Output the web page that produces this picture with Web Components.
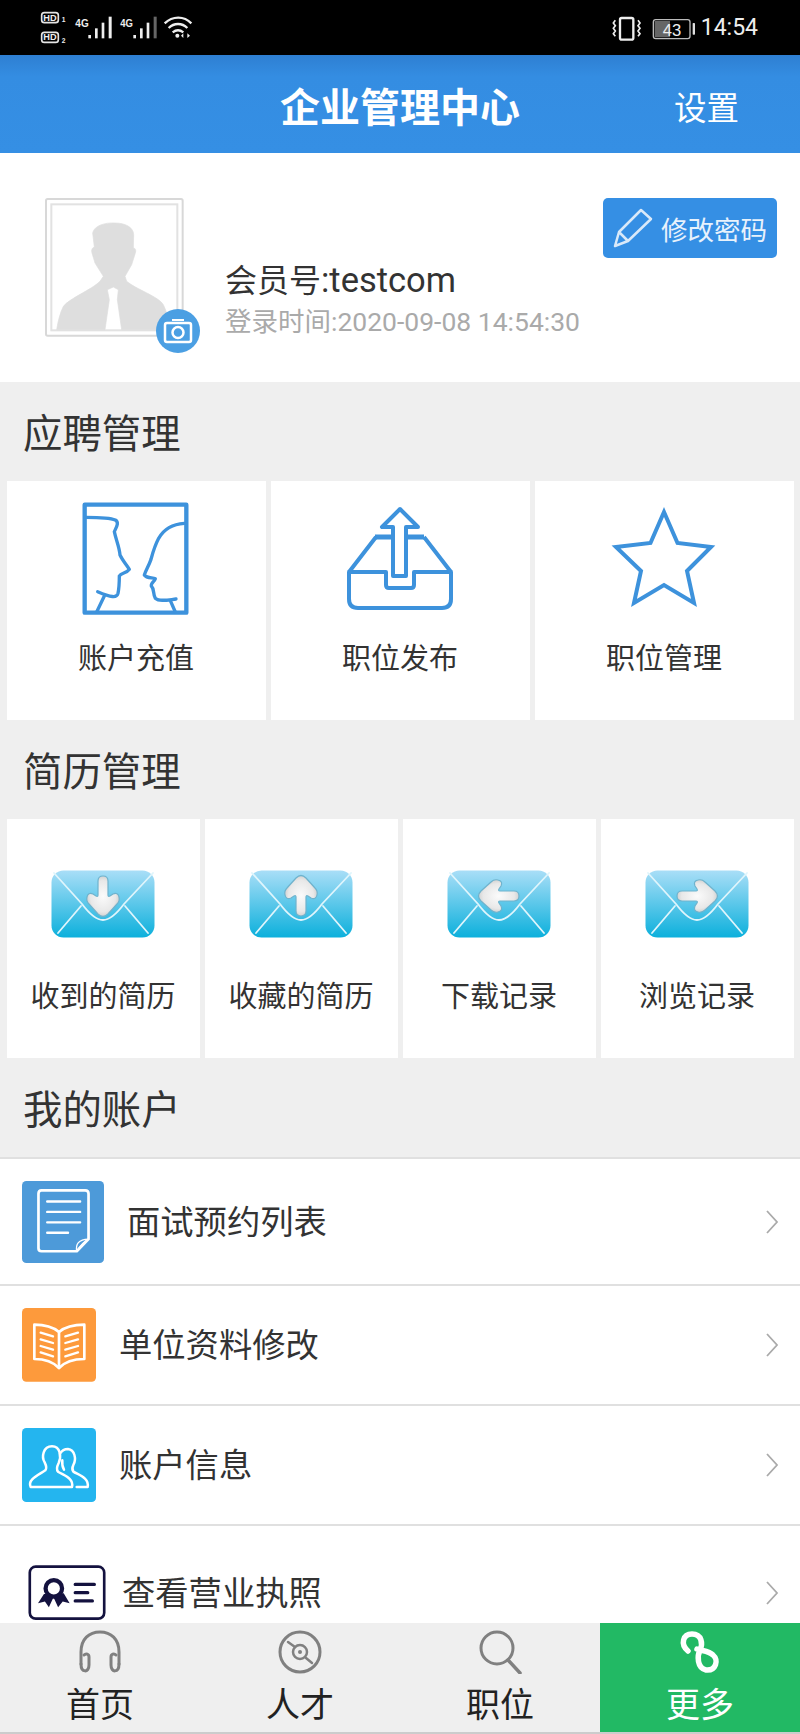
<!DOCTYPE html>
<html lang="zh-CN">
<head>
<meta charset="utf-8">
<title>企业管理中心</title>
<style>
    html, body {
        margin: 0;
        padding: 0;
        background: #efefef;
        font-family: Roboto, "Noto Sans CJK SC", sans-serif;
    }

    .page {
        width: 800px;
        height: 1734px;
        display: flex;
        flex-direction: column;
        overflow: hidden;
    }

    .main {
        flex: 1;
        min-height: 0;
        overflow: hidden;
    }
</style>
</head>
<body>
<div class="page">
    <status-bar></status-bar>
    <app-header title="企业管理中心" action="设置"></app-header>
    <div class="main">
        <profile-panel member="会员号" member-id=":testcom" login="登录时间:2020-09-08 14:54:30"></profile-panel>

        <section-title>应聘管理</section-title>
        <tile-grid columns="3">
            <menu-tile label="账户充值"><app-icon name="faces"></app-icon></menu-tile>
            <menu-tile label="职位发布"><app-icon name="inbox"></app-icon></menu-tile>
            <menu-tile label="职位管理"><app-icon name="star"></app-icon></menu-tile>
        </tile-grid>

        <section-title>简历管理</section-title>
        <tile-grid columns="4">
            <menu-tile label="收到的简历"><mail-icon dir="down"></mail-icon></menu-tile>
            <menu-tile label="收藏的简历"><mail-icon dir="up"></mail-icon></menu-tile>
            <menu-tile label="下载记录"><mail-icon dir="left"></mail-icon></menu-tile>
            <menu-tile label="浏览记录"><mail-icon dir="right"></mail-icon></menu-tile>
        </tile-grid>

        <section-title>我的账户</section-title>
        <list-row label="面试预约列表" style="--row-h:127px;--row-gap:23px"><app-icon name="doc"></app-icon></list-row>
        <list-row label="单位资料修改" style="--row-h:120px;--row-gap:23px"><app-icon name="book"></app-icon></list-row>
        <list-row label="账户信息" style="--row-h:120px;--row-gap:23px"><app-icon name="people"></app-icon></list-row>
        <list-row label="查看营业执照" style="--row-h:135px;--row-gap:16px;--row-pad:28px"><app-icon name="license"></app-icon></list-row>
    </div>
    <tab-bar>
        <tab-item label="首页"><app-icon name="headphones"></app-icon></tab-item>
        <tab-item label="人才"><app-icon name="disc"></app-icon></tab-item>
        <tab-item label="职位"><app-icon name="search"></app-icon></tab-item>
        <tab-item label="更多" active><app-icon name="more"></app-icon></tab-item>
    </tab-bar>
</div>

<script>
const ICONS = {
    faces: { w: 120, h: 120, box: '20 30 360 360', body: `
        <g fill="none" stroke="#3d92dc" stroke-width="10" stroke-linejoin="round" stroke-linecap="round">
            <rect x="46" y="44" width="305" height="324" stroke-width="13"/>
            <path d="M50 82 C85 82 120 82 138 90 C150 97 142 110 135 125 C140 150 150 170 152 195 C160 212 172 225 180 238 C172 250 155 248 150 258 C150 275 150 290 146 310 C142 325 125 322 85 305"/>
            <path d="M105 318 L82 366"/>
            <path d="M345 100 C310 102 285 115 268 145 C255 170 250 190 245 208 C238 228 230 240 225 255 C232 266 250 262 258 266 C255 275 244 280 246 288 C256 298 250 312 258 325 C270 336 295 330 320 327"/>
            <path d="M304 334 L318 366"/>
        </g>` },
    inbox: { w: 120, h: 120, box: '0 0 120 120', body: `
        <g fill="none" stroke="#3d92dc" stroke-width="4" stroke-linejoin="round">
            <path d="M60 9 L42 27 H53 V76 H66 V27 H78 Z"/>
            <path d="M35 37 H52 M67 37 H84" stroke-width="5"/>
            <path d="M36 37 L9 72 M84 37 L111 72" />
            <path d="M9 72 H46 V85 Q46 88 49 88 H71 Q74 88 74 85 V72 H111 V99 Q111 108 102 108 H18 Q9 108 9 99 Z"/>
        </g>` },
    star: { w: 120, h: 120, box: '0 0 120 120', body: `
        <path d="M60 12 L73.500 43 L107 47 L83 71 L90 103 L60 85 L30 103 L37 71 L12 47 L46.500 43 Z" fill="none" stroke="#3d92dc" stroke-width="4" stroke-linejoin="miter"/>` },
    doc: { w: 82, h: 82, box: '67 92 244 244', body: `
        <rect x="67" y="92" width="244" height="244" rx="13" fill="#4d9ad9"/>
        <g fill="none" stroke="#fff" stroke-width="8" stroke-linejoin="round" stroke-linecap="round">
            <path d="M125 120 H255 Q265 120 265 130 V265 L230 301 H125 Q116 301 116 292 V130 Q116 120 125 120 Z"/>
            <path d="M142 153 H240 M142 184 H240 M142 215 H240 M142 246 H204" stroke-width="7"/>
            <path d="M230 301 C226 280 235 266 265 265 C255 270 240 285 230 301 Z" stroke-width="4"/>
        </g>` },
    book: { w: 74, h: 74, box: '67 475 222 222', body: `
        <rect x="67" y="475" width="222" height="221" rx="13" fill="#fd9a3c"/>
        <g fill="none" stroke="#fff" stroke-width="8" stroke-linejoin="round" stroke-linecap="round">
            <path d="M104 525 C135 525 160 532 178 547 C196 532 222 525 254 525 V628 C222 628 196 636 178 655 C160 636 135 628 104 628 Z"/>
            <path d="M178 547 V655"/>
            <path d="M123 549 L160 560 M123 569 L160 580 M123 589 L160 600 M123 608 L160 620" stroke-width="7"/>
            <path d="M235 549 L197 560 M235 569 L197 580 M235 589 L197 600 M235 608 L197 620" stroke-width="7"/>
        </g>` },
    people: { w: 74, h: 74, box: '22 25 222 222', body: `
        <rect x="22" y="25" width="222" height="222" rx="13" fill="#24b5ef"/>
        <g fill="none" stroke="#fff" stroke-width="7.500" stroke-linejoin="round" stroke-linecap="round">
            <path d="M48 202 C38 180 68 168 92 152 C97 146 95 138 90 128 C80 112 85 80 112 80 C138 80 140 112 132 130 C126 142 125 150 130 156 C148 168 178 175 172 202 Z"/>
            <path d="M136 102 C142 92 152 88 160 88 C180 90 186 118 176 136 C172 144 172 150 176 156 C192 166 224 174 219 202 H186"/>
            <path d="M148 150 C143 142 142 132 143 122"/>
        </g>` },
    license: { w: 78, h: 55, box: '37 432 236 167', body: `
        <rect x="42" y="437" width="226" height="158" rx="18" fill="#fff" stroke="#14123f" stroke-width="8"/>
        <path d="M85 520 L67 548 L88 543 L100 560 L114 530 L128 560 L142 543 L163 548 L145 518 Z" fill="#14123f"/>
        <circle cx="115" cy="503" r="25" fill="#fff" stroke="#14123f" stroke-width="13"/>
        <path d="M180 491 H238 M180 516 H218 M180 541 H232" stroke="#14123f" stroke-width="10" stroke-linecap="round"/>` },
    headphones: { w: 44, h: 44, box: '0 0 44 44', body: `
        <g fill="none" stroke="#808080" stroke-width="3" stroke-linecap="round">
            <path d="M3 34 V22 C3 9 11 2 22 2 C33 2 41 9 41 22 V34"/>
            <path d="M3 34 C3 43 11 43 11 35 V27 C11 24 8 23 6 25"/>
            <path d="M41 34 C41 43 33 43 33 35 V27 C33 24 36 23 38 25"/>
        </g>` },
    disc: { w: 44, h: 44, box: '0 0 44 44', body: `
        <g fill="none" stroke="#808080">
            <circle cx="22" cy="22" r="20" stroke-width="3"/>
            <circle cx="22" cy="22" r="7" stroke-width="2.500"/>
            <circle cx="22" cy="22" r="2" fill="#808080" stroke="none"/>
            <path d="M10 12 L17 17 M28 28 L34 33" stroke-width="2.500" stroke-linecap="round"/>
        </g>` },
    search: { w: 44, h: 44, box: '0 0 44 44', body: `
        <g fill="none" stroke="#808080" stroke-width="3" stroke-linecap="round">
            <circle cx="19" cy="18" r="16"/>
            <path d="M30 30 L42 43" stroke-width="3.500"/>
        </g>` },
    more: { w: 44, h: 44, box: '0 0 44 44', body: `
        <path d="M10 21 C2 14 5 4 14 4 C24 4 25 14 22 20 C19 26 19 38 28 40 C38 41 41 30 35 25 C31 21 25 21 19 19" fill="none" stroke="#fff" stroke-width="5.500" stroke-linecap="round"/>` }
};

class AppIcon extends HTMLElement {
    constructor() {
        super();
        this.attachShadow({ mode: 'open' });
    }

    connectedCallback() {
        const icon = ICONS[this.getAttribute('name')];
        this.shadowRoot.innerHTML = `
        <style>
            :host { display: block; line-height: 0; }
            svg { display: block; }
        </style>
        <svg width="${icon.w}" height="${icon.h}" viewBox="${icon.box}">${icon.body}</svg>
        `;
    }
}

class MailIcon extends HTMLElement {
    constructor() {
        super();
        this.attachShadow({ mode: 'open' });
    }

    connectedCallback() {
        const angle = { down: 0, up: 180, left: 90, right: -90 }[this.getAttribute('dir')] || 0;
        this.shadowRoot.innerHTML = `
        <style>
            :host { display: block; margin-top: 12px; line-height: 0; }
            svg { display: block; }
        </style>
        <svg width="104" height="68" viewBox="0 0 104 68">
            <defs>
                <linearGradient id="env" x1="0" y1="0" x2="0" y2="1">
                    <stop offset="0" stop-color="#a9def7"/>
                    <stop offset="1" stop-color="#0cb0dc"/>
                </linearGradient>
                <radialGradient id="arrow" cx="0.5" cy="0.5" r="0.55">
                    <stop offset="0" stop-color="#fbfbfb"/>
                    <stop offset="0.7" stop-color="#e8e8e8"/>
                    <stop offset="1" stop-color="#c8c8c8"/>
                </radialGradient>
            </defs>
            <rect x="0.500" y="0.500" width="103" height="67" rx="12" fill="url(#env)"/>
            <g fill="none" stroke="#dff5fc" stroke-width="1.800" stroke-linecap="round">
                <path d="M3 3 L31 34 C37 42 45 50 52 50 C59 50 67 42 73 34 L102 3"/>
                <path d="M7 63 L30 36 M97 63 L74 36"/>
            </g>
            <path transform="rotate(${angle} 52 26)" d="M47 11 Q47 6 52 6 Q57 6 57 11 V25 Q57 27 59 26 L62 24 Q67 22 68 27 Q69 31 66 34 L57 44 Q52 49 47 44 L38 34 Q35 31 36 27 Q37 22 42 24 L45 26 Q47 27 47 25 Z" fill="url(#arrow)" stroke="#6fb3cd" stroke-width="1.200"/>
        </svg>
        `;
    }
}

class StatusBar extends HTMLElement {
    constructor() {
        super();
        this.attachShadow({ mode: 'open' });
    }

    connectedCallback() {
        this.shadowRoot.innerHTML = `
        <style>
            :host {
                display: flex;
                align-items: center;
                justify-content: space-between;
                height: 55px;
                background: #000;
                color: #fff;
                flex: none;
            }

            svg { display: block; }
            .right { display: flex; align-items: center; gap: 1px; padding-right: 42px; }
            .time { font-size: 23px; line-height: 30px; color: #eee; }
            text { font-family: "Liberation Sans", sans-serif; }
        </style>
        <svg width="200" height="55" viewBox="0 0 600 165">
            <g fill="none" stroke="#e4e4e4" stroke-width="5">
                <rect x="125" y="38" width="50" height="30" rx="8"/>
                <rect x="125" y="97" width="50" height="30" rx="8"/>
            </g>
            <g fill="#eee" font-weight="700">
                <text x="130" y="62" font-size="26" textLength="40" lengthAdjust="spacingAndGlyphs">HD</text>
                <text x="130" y="121" font-size="26" textLength="40" lengthAdjust="spacingAndGlyphs">HD</text>
                <text x="185" y="66" font-size="20">1</text>
                <text x="185" y="128" font-size="20">2</text>
                <text x="226" y="81" font-size="35" textLength="40" lengthAdjust="spacingAndGlyphs">4G</text>
                <text x="361" y="81" font-size="35" textLength="38" lengthAdjust="spacingAndGlyphs">4G</text>
            </g>
            <g fill="#eee">
                <rect x="265" y="105" width="8" height="10"/>
                <rect x="285" y="85" width="8" height="30"/>
                <rect x="305" y="68" width="8" height="47"/>
                <rect x="326" y="50" width="9" height="65"/>
                <rect x="400" y="105" width="8" height="10"/>
                <rect x="420" y="85" width="8" height="30"/>
                <rect x="440" y="68" width="8" height="47"/>
                <rect x="461" y="50" width="9" height="65" fill="#666"/>
            </g>
            <g fill="none" stroke="#eee" stroke-width="7">
                <path d="M494 70 C518 47 552 47 574 70"/>
                <path d="M506 84 C522 68 546 68 562 84"/>
                <path d="M518 97 C528 89 540 89 550 97"/>
            </g>
            <circle cx="532" cy="107" r="6" fill="#eee"/>
            <path d="M550 100 L550 114 L543 107 Z M562 100 L562 114 L570 107 Z" fill="#eee"/>
        </svg>
        <div class="right">
            <svg width="90" height="30" viewBox="30 20 270 90">
                <rect x="60" y="35" width="40" height="65" rx="5" fill="none" stroke="#eee" stroke-width="7"/>
                <path d="M46 42 L40 50 L46 58 L40 66 L46 74 L40 82 L46 90 M114 42 L120 50 L114 58 L120 66 L114 74 L120 82 L114 90" fill="none" stroke="#eee" stroke-width="5"/>
                <rect x="160" y="40" width="110" height="57" rx="7" fill="none" stroke="#bbb" stroke-width="4"/>
                <rect x="164" y="44" width="46" height="49" fill="#666"/>
                <rect x="278" y="50" width="7" height="35" rx="2" fill="#ddd"/>
                <text x="188" y="88" font-size="50" fill="#eee">43</text>
            </svg>
            <span class="time">14:54</span>
        </div>
        `;
    }
}

class AppHeader extends HTMLElement {
    constructor() {
        super();
        this.attachShadow({ mode: 'open' });
    }

    connectedCallback() {
        const title = this.getAttribute('title') || '';
        const action = this.getAttribute('action') || '';
        this.shadowRoot.innerHTML = `
        <style>
            :host {
                display: grid;
                grid-template-columns: 1fr auto 1fr;
                align-items: center;
                box-sizing: border-box;
                height: 98px;
                padding-top: 9px;
                flex: none;
                background: linear-gradient(#2e7fd2, #348de2 22%, #358fe4);
                color: #fff;
            }

            h1 {
                grid-column: 2;
                margin: 0;
                font-size: 40px;
                line-height: 50px;
                font-weight: 700;
            }

            .action {
                justify-self: end;
                padding-right: 61px;
                font-size: 32.500px;
                line-height: 40px;
            }
        </style>
        <h1>${title}</h1>
        <div class="action">${action}</div>
        `;
    }
}

class ProfilePanel extends HTMLElement {
    constructor() {
        super();
        this.attachShadow({ mode: 'open' });
    }

    connectedCallback() {
        const member = this.getAttribute('member') || '';
        const memberId = this.getAttribute('member-id') || '';
        const login = this.getAttribute('login') || '';
        this.shadowRoot.innerHTML = `
        <style>
            :host {
                display: flex;
                box-sizing: border-box;
                height: 229px;
                padding: 45px 23px 0 45px;
                background: #fff;
            }

            .avatar { position: relative; width: 139px; height: 139px; flex: none; }
            .avatar svg { display: block; }

            .camera {
                position: absolute;
                left: 111px;
                top: 111px;
                width: 44px;
                height: 44px;
            }

            .info { flex: 1; margin-left: 41px; padding-top: 62px; }
            .member { font-size: 32px; line-height: 40px; color: #333; white-space: nowrap; }
            .member span { font-size: 34.500px; }
            .login { margin-top: 1px; font-size: 26.500px; line-height: 40px; color: #aaa; white-space: nowrap; }

            .pwd {
                display: flex;
                align-items: center;
                gap: 8px;
                box-sizing: border-box;
                width: 174px;
                height: 60px;
                padding-left: 10px;
                border-radius: 5px;
                background: #358fe4;
                color: #e8f2fc;
                font-size: 26.500px;
                flex: none;
                white-space: nowrap;
            }
        </style>
        <div class="avatar">
            <svg width="139" height="139" viewBox="45 25 417 417">
                <rect x="48" y="28" width="410" height="410" rx="5" fill="#fff" stroke="#d8d8d8" stroke-width="6"/>
                <rect x="64" y="44" width="378" height="378" fill="#fff" stroke="#e2e2e2" stroke-width="6"/>
                <path d="M188 130 C192 108 225 98 255 100 C285 100 310 112 311 135 L310 175 Q320 176 316 190 L305 225 L285 260 L290 275 C320 300 385 320 400 345 C410 365 418 395 420 420 L275 420 L262 330 L265 300 L250 292 L232 300 L238 330 L225 420 L80 420 C84 395 90 370 100 350 C120 325 185 300 210 275 L220 260 L195 220 L186 190 Q182 176 193 172 Z" fill="#dedede" stroke="#dedede" stroke-width="2" stroke-linejoin="round"/>
            </svg>
            <svg class="camera" viewBox="0 0 44 44">
                <circle cx="22" cy="22" r="22" fill="#4b9fe3"/>
                <g fill="none" stroke="#fff" stroke-width="2.500">
                    <rect x="9" y="14" width="26" height="19" rx="2"/>
                    <circle cx="22" cy="23.500" r="5.500"/>
                    <path d="M16 11 H28" stroke-width="2"/>
                </g>
            </svg>
        </div>
        <div class="info">
            <div class="member">${member}<span>${memberId}</span></div>
            <div class="login">${login}</div>
        </div>
        <div class="pwd">
            <svg width="40" height="40" viewBox="0 0 40 40">
                <path d="M2 38 L6 24 L28 2 L38 11 L15 33 Z M6 24 L15 33" fill="none" stroke="#d9e9f9" stroke-width="2.500" stroke-linejoin="round"/>
            </svg>
            <span>修改密码</span>
        </div>
        `;
    }
}

class SectionTitle extends HTMLElement {
    constructor() {
        super();
        this.attachShadow({ mode: 'open' });
    }

    connectedCallback() {
        this.shadowRoot.innerHTML = `
        <style>
            :host {
                display: flex;
                align-items: center;
                box-sizing: border-box;
                height: 99px;
                padding: 0 0 2px 23px;
                font-size: 39.400px;
                color: #333;
                background: #efefef;
            }
        </style>
        <slot></slot>
        `;
    }
}

class TileGrid extends HTMLElement {
    constructor() {
        super();
        this.attachShadow({ mode: 'open' });
    }

    connectedCallback() {
        const columns = this.getAttribute('columns') || 3;
        this.shadowRoot.innerHTML = `
        <style>
            :host {
                display: grid;
                grid-template-columns: repeat(${columns}, 1fr);
                gap: 5px;
                padding: 0 6.500px;
                background: #efefef;
            }
        </style>
        <slot></slot>
        `;
    }
}

class MenuTile extends HTMLElement {
    constructor() {
        super();
        this.attachShadow({ mode: 'open' });
    }

    connectedCallback() {
        const label = this.getAttribute('label') || '';
        this.shadowRoot.innerHTML = `
        <style>
            :host {
                display: flex;
                flex-direction: column;
                align-items: center;
                box-sizing: border-box;
                height: 239px;
                padding-top: 19px;
                background: #fff;
            }

            .icon { display: flex; align-items: center; justify-content: center; height: 120px; }
            .label { margin-top: 19px; font-size: 29px; line-height: 40px; color: #333; white-space: nowrap; }
        </style>
        <div class="icon"><slot></slot></div>
        <div class="label">${label}</div>
        `;
    }
}

class ListRow extends HTMLElement {
    constructor() {
        super();
        this.attachShadow({ mode: 'open' });
    }

    connectedCallback() {
        const label = this.getAttribute('label') || '';
        this.shadowRoot.innerHTML = `
        <style>
            :host {
                display: flex;
                align-items: center;
                box-sizing: border-box;
                height: var(--row-h, 120px);
                padding: 0 21px 0 var(--row-pad, 22px);
                border-top: 2px solid #e0e0e0;
                background: #fff;
            }

            .label {
                flex: 1;
                margin: 2px 0 0 var(--row-gap, 24px);
                font-size: 33.300px;
                line-height: 44px;
                color: #333;
            }

            svg { display: block; }
        </style>
        <slot></slot>
        <div class="label">${label}</div>
        <svg width="14" height="24" viewBox="0 0 14 24">
            <path d="M2 1 L12 12 L2 23" fill="none" stroke="#aaa" stroke-width="1.800"/>
        </svg>
        `;
    }
}

class TabBar extends HTMLElement {
    constructor() {
        super();
        this.attachShadow({ mode: 'open' });
    }

    connectedCallback() {
        this.shadowRoot.innerHTML = `
        <style>
            :host {
                display: grid;
                grid-template-columns: repeat(4, 1fr);
                box-sizing: border-box;
                height: 111px;
                flex: none;
                border-bottom: 2px solid #ccc;
                background: #efefef;
            }
        </style>
        <slot></slot>
        `;
    }
}

class TabItem extends HTMLElement {
    constructor() {
        super();
        this.attachShadow({ mode: 'open' });
    }

    connectedCallback() {
        const label = this.getAttribute('label') || '';
        this.shadowRoot.innerHTML = `
        <style>
            :host {
                display: flex;
                flex-direction: column;
                align-items: center;
                padding-top: 7px;
                color: #222;
            }

            :host([active]) {
                background: #22b964;
                color: #fff;
            }

            .label { margin-top: 11px; font-size: 34px; line-height: 40px; }
        </style>
        <slot></slot>
        <div class="label">${label}</div>
        `;
    }
}

customElements.define('app-icon', AppIcon);
customElements.define('mail-icon', MailIcon);
customElements.define('status-bar', StatusBar);
customElements.define('app-header', AppHeader);
customElements.define('profile-panel', ProfilePanel);
customElements.define('section-title', SectionTitle);
customElements.define('tile-grid', TileGrid);
customElements.define('menu-tile', MenuTile);
customElements.define('list-row', ListRow);
customElements.define('tab-bar', TabBar);
customElements.define('tab-item', TabItem);
</script>
</body>
</html>
